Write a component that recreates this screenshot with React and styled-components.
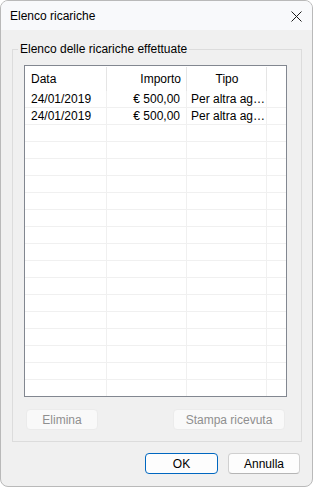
import React from "react";
import styled, { createGlobalStyle } from "styled-components";

const GlobalStyle = createGlobalStyle`
  html, body {
    margin: 0;
    padding: 0;
    background: #ffffff;
  }
  body {
    font-family: "Segoe UI", "Liberation Sans", Arial, sans-serif;
    font-size: 12px;
    color: #000;
  }
  * { box-sizing: border-box; }
`;

const Window = styled.div`
  width: 313px;
  height: 487px;
  border: 1px solid #b9b9b9;
  border-radius: 8px;
  overflow: hidden;
  background: #f0f0f0;
  display: flex;
  flex-direction: column;
`;

const TitleBar = styled.div`
  height: 29px;
  flex: none;
  background: #f8f9fb;
  display: flex;
  align-items: center;
  justify-content: space-between;
  padding: 1px 10px 0 9px;
`;

const Title = styled.span`
  font-size: 12px;
  line-height: 16px;
`;

const CloseButton = styled.button`
  border: none;
  background: transparent;
  padding: 0;
  width: 12px;
  height: 12px;
  display: flex;
  align-items: center;
  justify-content: center;
  color: #1b1b1b;
`;

const Body = styled.div`
  flex: 1;
  display: flex;
  flex-direction: column;
  padding: 11px 10px 0 11px;
`;

const Group = styled.fieldset`
  margin: 0;
  padding: 0 14px 11px 5px;
  border: 1px solid #dcdcdc;
  min-width: 0;
`;

const Legend = styled.legend`
  padding: 0 2px;
  line-height: 16px;
  font-size: 12px;
`;

const GroupInner = styled.div`
  padding: 8px 0 0 6px;
  display: flex;
  flex-direction: column;
  gap: 12px;
`;

const List = styled.div`
  width: 263px;
  height: 332px;
  border: 1px solid #828790;
  background: #ffffff;
  overflow: hidden;
`;

const Row = styled.div`
  display: grid;
  grid-template-columns: 82px 80px 80px 1fr;
  height: ${(p) => (p.$header ? "25px" : "17px")};
  border-bottom: ${(p) => (p.$header ? "none" : "1px solid #f0f0f0")};
`;

const Cell = styled.div`
  display: flex;
  align-items: center;
  justify-content: ${(p) =>
    p.$align === "right" ? "flex-end" : p.$align === "center" ? "center" : "flex-start"};
  padding: ${(p) => (p.$align === "right" ? "0 6px 0 0" : p.$align === "center" ? "0" : `0 0 0 ${p.$pad || 6}px`)};
  border-right: 1px solid ${(p) => (p.$last ? "transparent" : "#f0f0f0")};
  white-space: nowrap;
  overflow: hidden;
  line-height: 16px;
`;

const HeadCell = styled(Cell)`
  border-right: none;
  position: relative;
  padding-top: 1px;
  &::after {
    content: "";
    position: absolute;
    right: 0;
    top: 1px;
    bottom: 0;
    width: 1px;
    background: ${(p) => (p.$last ? "transparent" : "#e5e5e5")};
  }
`;

const ButtonRow = styled.div`
  display: flex;
  justify-content: space-between;
  padding: 0 2px 0 2px;
  width: 263px;
`;

const Button = styled.button`
  height: 21px;
  width: ${(p) => p.$w}px;
  font-family: inherit;
  font-size: 12px;
  padding: 0;
  border-radius: 4px;
  background: ${(p) => (p.disabled ? "#f9f9f9" : "#fdfdfd")};
  color: ${(p) => (p.disabled ? "#8f8f8f" : "#000")};
  border: 1px solid
    ${(p) => (p.$primary ? "#0067c0" : p.disabled ? "#ebebeb" : "#d0d0d0")};
  border-bottom-color: ${(p) =>
    p.$primary ? "#0067c0" : p.disabled ? "#ebebeb" : "#b5b5b5"};
`;

const Footer = styled.div`
  display: flex;
  justify-content: flex-end;
  gap: 10px;
  padding: 11px 2px 0 0;
`;

const rows = [
  { date: "24/01/2019", amount: "€ 500,00", type: "Per altra ag…" },
  { date: "24/01/2019", amount: "€ 500,00", type: "Per altra ag…" },
];

export default function App() {
  const filled = [...rows, ...Array.from({ length: 18 }, () => null)];
  return (
    <>
      <GlobalStyle />
      <Window>
        <TitleBar>
          <Title>Elenco ricariche</Title>
          <CloseButton aria-label="Chiudi">
            <svg width="11" height="11" viewBox="0 0 11 11">
              <path d="M0.5 0.5 L10.5 10.5 M10.5 0.5 L0.5 10.5" stroke="currentColor" strokeWidth="1" />
            </svg>
          </CloseButton>
        </TitleBar>
        <Body>
          <Group>
            <Legend>Elenco delle ricariche effettuate</Legend>
            <GroupInner>
              <List>
                <Row $header>
                  <HeadCell>Data</HeadCell>
                  <HeadCell $align="right">Importo</HeadCell>
                  <HeadCell $align="center">Tipo</HeadCell>
                  <HeadCell $last />
                </Row>
                {filled.map((r, i) => (
                  <Row key={i}>
                    <Cell>{r ? r.date : ""}</Cell>
                    <Cell $align="right">{r ? r.amount : ""}</Cell>
                    <Cell $pad={4}>{r ? r.type : ""}</Cell>
                    <Cell $last />
                  </Row>
                ))}
              </List>
              <ButtonRow>
                <Button disabled $w={72}>Elimina</Button>
                <Button disabled $w={112}>Stampa ricevuta</Button>
              </ButtonRow>
            </GroupInner>
          </Group>
          <Footer>
            <Button $primary $w={73}>OK</Button>
            <Button $w={72}>Annulla</Button>
          </Footer>
        </Body>
      </Window>
    </>
  );
}
